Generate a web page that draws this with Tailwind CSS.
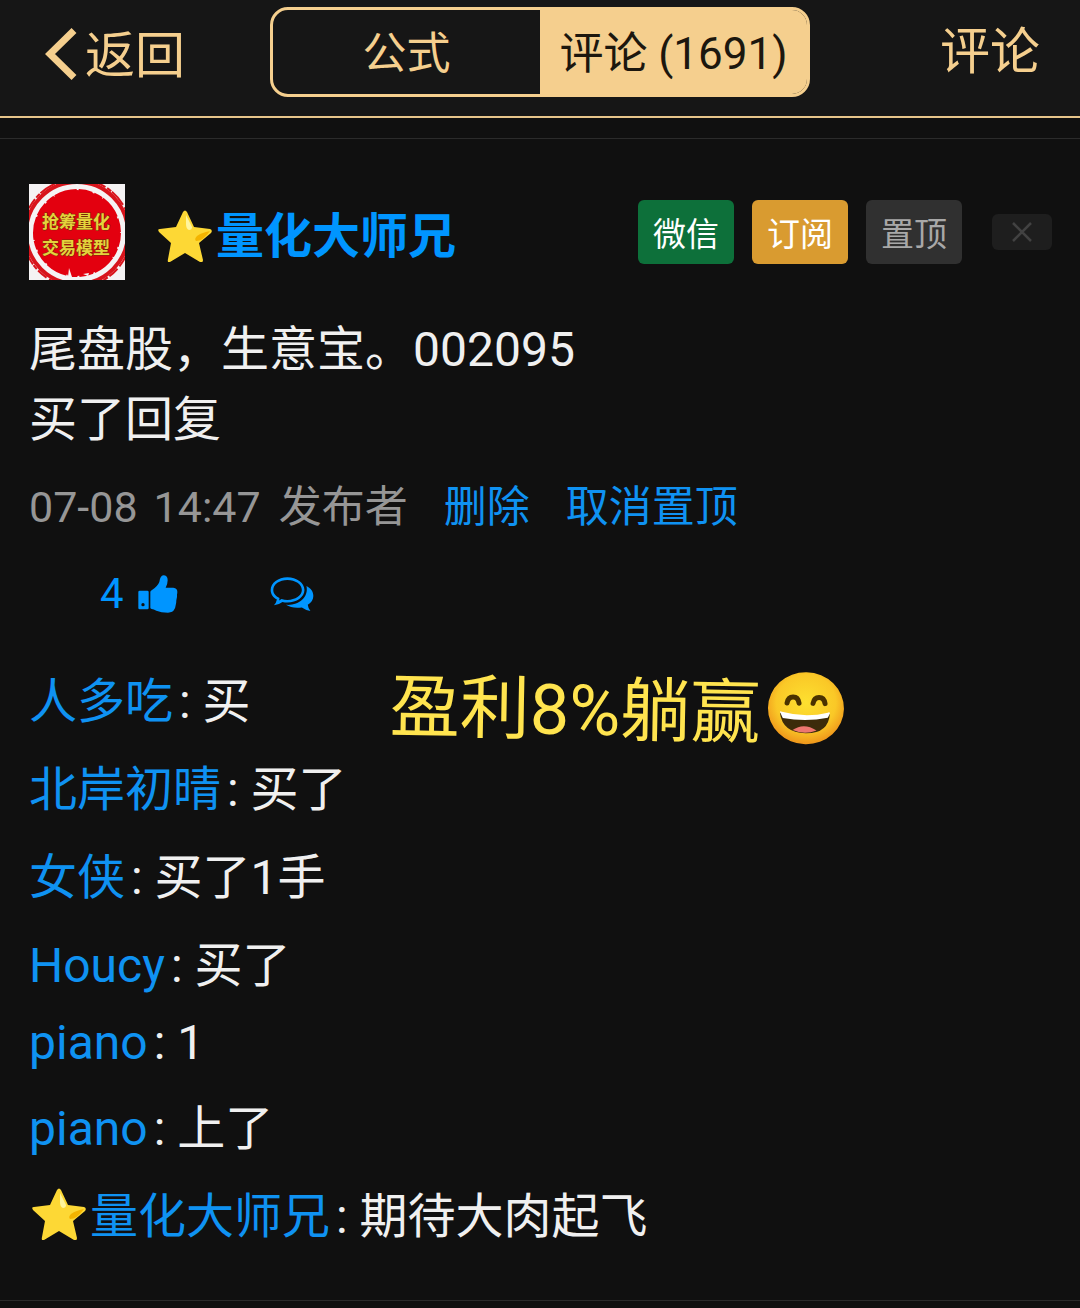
<!DOCTYPE html>
<html lang="zh-CN">
<head>
    <meta charset="UTF-8">
    <meta name="viewport" content="width=device-width, initial-scale=1.0">
    <title>评论</title>
    <script src="https://cdn.jsdelivr.net/npm/@tailwindcss/browser@4"></script>
</head>
<body class="bg-[#101010] min-h-screen text-[#f0f0f0] font-['Roboto','Noto_Sans_CJK_SC',sans-serif]">
    <!-- Shared shapes -->
    <svg class="hidden" aria-hidden="true">
        <defs>
            <symbol id="star" viewBox="0 0 54 52">
                <path d="M25 2Q27-1 29 2L36 17L52 19Q55 20 53 23L41 33L45 50Q45 53 42 52L27 43L12 52Q9 53 10 49L13 33L1 22Q-1 19 2 19L18 17Z" fill="#fdd835"/>
                <path d="M28 5L34 17Q34 20 31 20Q28 19 28 14Z" fill="#fff59d"/>
                <path d="M52 21Q45 31 38 31Q36 29 39 26Q43 23 52 21Z" fill="#f4b400"/>
            </symbol>
        </defs>
    </svg>

    <!-- Header -->
    <header class="bg-[#161616] border-b-2 border-[#e6c48a] pt-[7px] pb-[19px] grid grid-cols-[1fr_2fr_1fr] items-center text-[50px] text-[#f5cf8e]">
        <a href="#" class="pl-[45px] pt-1 flex items-center gap-2 whitespace-nowrap">
            <svg class="w-8 h-[52px]" viewBox="0 0 32 52" fill="none" stroke="currentColor" stroke-width="7">
                <path d="M29 2.500L5 26L29 49.500"/>
            </svg>
            <span class="leading-none pt-1">返回</span>
        </a>
        <nav class="h-[90px] flex border-3 border-[#f5cf8e] rounded-[18px] overflow-hidden text-[44px]">
            <button class="w-1/2 pt-1">公式</button>
            <button class="w-1/2 pt-1 bg-[#f5cf8e] text-[#1c170e] whitespace-nowrap">评论 (1691)</button>
        </nav>
        <a href="#" class="pr-10 text-right leading-none">评论</a>
    </header>

    <!-- Post -->
    <main class="mt-5 border-y border-[#2b2b2b] pt-[45px] pb-[53px] pl-[29px] pr-7 text-[48px] leading-[normal]">
        <div class="flex items-center">
            <svg class="w-24 h-24 shrink-0" viewBox="0 0 96 96" role="img" aria-label="抢筹量化交易模型">
                <rect width="96" height="96" fill="#f5f3f4"/>
                <circle cx="48" cy="49" r="51" fill="none" stroke="#d8141c" stroke-width="4"/>
                <circle cx="48" cy="49" r="54" fill="none" stroke="#d8141c" stroke-width="2" stroke-dasharray="11 2 5 1 17 3"/>
                <circle cx="48" cy="49" r="43" fill="#e3000f"/>
                <circle cx="48" cy="49" r="43" fill="none" stroke="#e3000f" stroke-width="2" stroke-dasharray="14 2 9 1 23 2"/>
                <path d="M36 94L38 90L39 93L40 84L43 93ZM54 90L60 89L59 92Z" fill="#f5f3f4"/>
                <g font-size="17" font-weight="700" fill="#e4d33c" stroke="#7a2a08" stroke-width="1" paint-order="stroke" text-anchor="middle">
                    <text x="47" y="44">抢筹量化</text>
                    <text x="47" y="70">交易模型</text>
                </g>
            </svg>
            <a href="#" class="ml-[33px] flex items-center gap-1 font-bold text-[#0095ff]">
                <svg class="w-[54px] h-[52px] mt-2"><use href="#star"/></svg>
                <span>量化大师兄</span>
            </a>
            <div class="ml-auto flex items-center gap-[18px] text-[33px]">
                <button class="w-24 h-16 rounded-md bg-[#0d703a] text-white">微信</button>
                <button class="w-24 h-16 rounded-md bg-[#d99b30] text-white">订阅</button>
                <button class="w-24 h-16 rounded-md bg-[#303030] text-[#a8a8a8]">置顶</button>
                <button class="w-[60px] h-9 ml-3 rounded-md bg-[#1e1e1e] text-[#424242] flex items-center justify-center" aria-label="关闭">
                    <svg class="w-5 h-5" viewBox="0 0 20 20" fill="none" stroke="currentColor" stroke-width="2.500"><path d="M1 1L19 19M19 1L1 19"/></svg>
                </button>
            </div>
        </div>

        <p class="mt-[30px]">尾盘股，生意宝。002095<br>买了回复</p>

        <div class="mt-[22px] flex items-baseline text-[43px] text-[#969696]">
            <span>07-08</span>
            <span class="ml-4">14:47</span>
            <span class="ml-[18px]">发布者</span>
            <a href="#" class="ml-9 text-[#0f92f2]">删除</a>
            <a href="#" class="ml-9 text-[#0f92f2]">取消置顶</a>
        </div>

        <div class="mt-[35px] ml-[71px] flex items-center text-[42px] text-[#0095ff]">
            <button class="flex items-center gap-[14px]">
                <span>4</span>
                <svg class="w-10 h-[38px]" viewBox="357 311 118 114" fill="currentColor" aria-label="赞">
                    <path fill-rule="evenodd" d="M361 358H384Q388 358 388 362V410Q388 414 384 414H361Q357 414 357 410V362Q357 358 361 358ZM371 395A5 5 0 1 0 371 405A5 5 0 1 0 371 395Z"/>
                    <path d="M393 362Q393 359 397 357Q415 345 420 332Q423 312 432 312Q445 312 445 327Q445 338 439 349H462Q474 350 474 361Q474 366 473 370Q474 377 471 387Q471 395 469 402Q468 410 465 414Q461 424 446 424Q425 424 411 418Q403 414 397 413Q393 412 393 409Z"/>
                </svg>
            </button>
            <button class="ml-[92px]" aria-label="回复">
                <svg class="w-11 h-9" viewBox="750 318 134 108" fill="currentColor">
                    <path fill-rule="evenodd" d="M803 321C831 321 855 338 855 360C855 382 831 398 803 398Q795 398 788 396Q778 404 762 406Q769 400 771 389C759 383 752 372 752 360C752 338 775 321 803 321ZM803 329C779 329 760 342 760 360C760 370 767 379 779 384L778 392L785 387Q794 390 803 390C827 390 847 377 847 360C847 342 827 329 803 329Z"/>
                    <path d="M861 348C875 355 882 366 882 378C882 389 876 398 865 405Q866 415 873 424Q858 421 847 413C828 416 811 413 799 405C836 408 869 383 861 348Z"/>
                </svg>
            </button>
        </div>

        <!-- Replies -->
        <div class="relative mt-11">
            <ul class="flex flex-col gap-[18px]">
                <li><a href="#" class="mr-1.5 text-[#0f92f2]">人多吃</a>: 买</li>
                <li><a href="#" class="mr-1.5 text-[#0f92f2]">北岸初晴</a>: 买了</li>
                <li><a href="#" class="mr-1.5 text-[#0f92f2]">女侠</a>: 买了1手</li>
                <li><a href="#" class="mr-1.5 text-[#0f92f2]">Houcy</a>: 买了</li>
                <li><a href="#" class="mr-1.5 text-[#0f92f2]">piano</a>: 1</li>
                <li><a href="#" class="mr-1.5 text-[#0f92f2]">piano</a>: 上了</li>
                <li class="flex items-center">
                    <svg class="w-[54px] h-[52px] mt-1 mr-1 ml-[3px]"><use href="#star"/></svg>
                    <a href="#" class="mr-1.5 text-[#0f92f2]">量化大师兄</a>: 期待大肉起飞
                </li>
            </ul>

            <!-- Caption laid over the replies -->
            <div class="absolute left-[361px] -top-2 flex items-center gap-1.5 text-[70px] text-[#ffe44f] whitespace-nowrap rotate-1">
                <span>盈利8%躺赢</span>
                <svg class="w-[78px] h-[74px]" viewBox="0 0 78 74" role="img" aria-label="笑脸">
                    <defs>
                        <radialGradient id="face" cx="50%" cy="42%" r="56%">
                            <stop offset="0" stop-color="#fde030"/>
                            <stop offset="0.7" stop-color="#fac827"/>
                            <stop offset="1" stop-color="#f09a1c"/>
                        </radialGradient>
                    </defs>
                    <ellipse cx="39" cy="37" rx="38" ry="36" fill="url(#face)"/>
                    <path d="M20 32Q21 26 26 26Q31 26 32 32M46 32Q47 26 52 26Q57 26 58 32" fill="none" stroke="#4a3200" stroke-width="5" stroke-linecap="round"/>
                    <path d="M13 42Q39 50 63 42Q62 62 39 62Q16 62 13 42Z" fill="#3c2b0a"/>
                    <path d="M13 41Q13 40 15 41Q39 47 61 41Q63 40 63 42L61 46Q39 51 16 47Z" fill="#fff"/>
                    <path d="M26 59Q37 51 50 59Q38 64 26 59Z" fill="#ed7770"/>
                </svg>
            </div>
        </div>
    </main>
</body>
</html>
